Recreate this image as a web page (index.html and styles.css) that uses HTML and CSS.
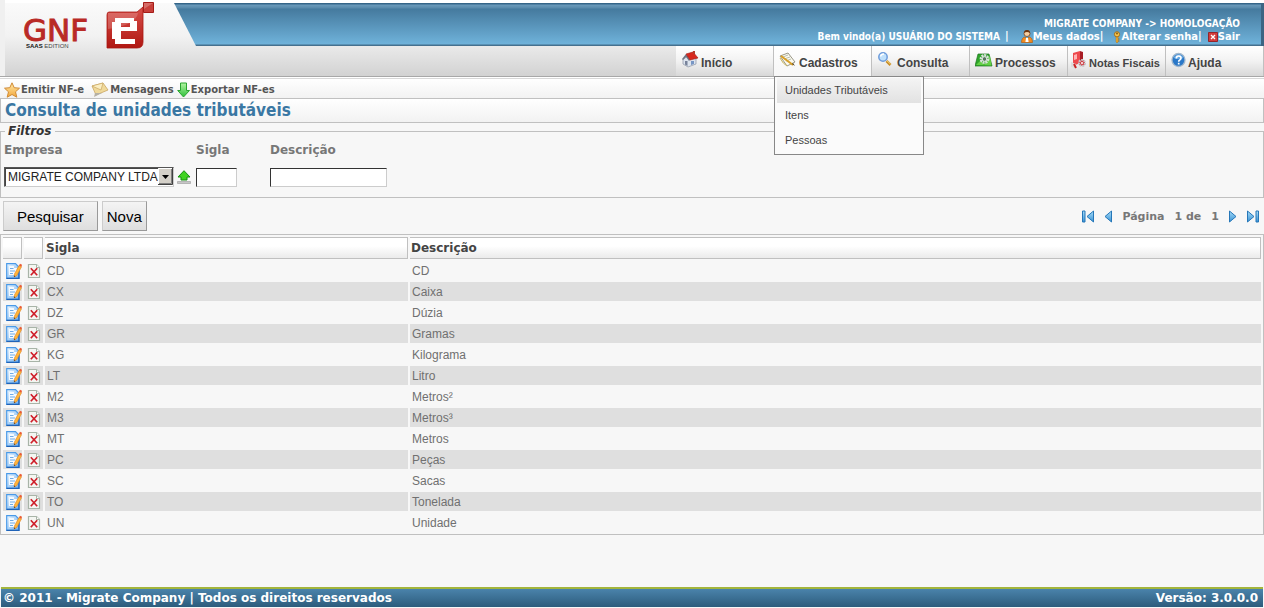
FILE: index.html
```html
<!DOCTYPE html>
<html lang="pt-BR">
<head>
<meta charset="utf-8">
<title>GNFe - Consulta de unidades tributáveis</title>
<link rel="stylesheet" href="styles.css">
</head>
<body>
<svg class="defs" aria-hidden="true">
  <defs>
    <linearGradient id="g-red" x1="0" y1="0" x2="0" y2="1"><stop offset="0" stop-color="#d8504a"/><stop offset="1" stop-color="#b01712"/></linearGradient>
    <linearGradient id="g-doc" x1="0" y1="0" x2="1" y2="1"><stop offset="0" stop-color="#eaf5ff"/><stop offset="1" stop-color="#6db0f2"/></linearGradient>
    <linearGradient id="g-arrow" x1="0" y1="0" x2="0" y2="1"><stop offset="0" stop-color="#a6dcf8"/><stop offset="1" stop-color="#3a92d4"/></linearGradient>
    <linearGradient id="g-green" x1="0" y1="0" x2="0" y2="1"><stop offset="0" stop-color="#b4f4a4"/><stop offset="1" stop-color="#2fc03a"/></linearGradient>
    <linearGradient id="g-star" x1="0" y1="0" x2="0" y2="1"><stop offset="0" stop-color="#ffe9a8"/><stop offset="1" stop-color="#f3a83c"/></linearGradient>
    <symbol id="i-edit" viewBox="0 0 16 16">
      <path d="M.7.700h8.800l3.300 3.300v11.300H.7z" fill="url(#g-doc)" stroke="#4a9ae8" stroke-width="1.200"/>
      <path d="M13 4v11.500H.5" fill="none" stroke="#1f63b8" stroke-width="1.300"/>
      <path d="M3 3h5v2h3v7H3z" fill="#f4faff"/>
      <path d="M4 5.500h3.500M4 8h5M4 10.500h3" stroke="#6faae6"/>
      <path d="M13 2.500l2.500 1.300-4.700 8.700-2.600 1.500.2-2.900z" fill="#ffb63a" stroke="#e0801e" stroke-width=".6"/>
      <path d="M13 2.500L14 .7l2 1-.5 2.100z" fill="#ea5a34"/><path d="M8.200 14l.1-1.500 1.100.8z" fill="#222"/>
    </symbol>
    <symbol id="i-del" viewBox="0 0 14 16">
      <path d="M1.500 1.500h8l3 3v10h-11z" fill="#f4f6f2" stroke="#a8b4a8" stroke-width="1.200"/>
      <path d="M9.500 1.500v3h3" fill="#fff" stroke="#a8b4a8"/>
      <path d="M3.800 5.200l6.400 7M10.200 5.200l-6.400 7" stroke="#cf1f2a" stroke-width="1.700"/>
    </symbol>
    <symbol id="i-first" viewBox="0 0 12 13"><path d="M.5 1h2.500v11H.5z" fill="url(#g-arrow)" stroke="#2677b8"/><path d="M11.500 1v11L5 6.500z" fill="url(#g-arrow)" stroke="#2677b8"/></symbol>
    <symbol id="i-prev" viewBox="0 0 8 13"><path d="M7.500 1v11L1 6.500z" fill="url(#g-arrow)" stroke="#2677b8"/></symbol>
  </defs>
</svg>

<header class="header">
  <a class="logo" href="#" aria-label="GNFe SaaS Edition">
    <svg width="140" height="52" viewBox="0 0 140 52">
      <text x="6" y="41" class="logo-name">GNF</text>
      <text x="9" y="48" class="logo-sub"><tspan class="logo-bold">SAAS</tspan> EDITION</text>
      <path d="M92 12h28l6-5v35q0 6-6 6H90V15q0-3 2-3z" fill="url(#g-red)" stroke="#a81813" stroke-width=".8"/>
      <path d="M91 13h30q-2 12-30 16z" fill="#fff" opacity=".18"/>
      <path fill-rule="evenodd" d="M98 18h19v3h3v10h-16v8h14v5H98v-5h-3V22h3zM104 23v4h9v-4z" fill="#fff"/>
      <path d="M126.500 2.500h10v10h-10z" fill="#c8403b" stroke="#a51c18"/>
      <path d="M127 3h9l-9 6z" fill="#e08a86" opacity=".6"/>
    </svg>
  </a>
  <div class="top">
    <div class="banner">
      <div class="company">MIGRATE COMPANY -&gt; HOMOLOGAÇÃO</div>
      <div class="user">
        <span class="welcome">Bem vindo(a) USUÁRIO DO SISTEMA</span><span class="bar">|</span>
        <a href="#" class="me"><svg width="12" height="13" viewBox="0 0 12 13"><circle cx="6" cy="3.500" r="3" fill="#f8cfa0" stroke="#7a431c" stroke-width=".8"/><path d="M3 3q0-3 3-3t3 3Q6 1 3 3z" fill="#6a3512"/><path d="M.5 12.500q0-5 3.500-5.500l2 2 2-2q3.500.5 3.500 5.500z" fill="#f28c22" stroke="#b85f10" stroke-width=".7"/><path d="M5 8h2l.6 4H4.400z" fill="#fff"/></svg>Meus dados</a><span>|</span>
        <a href="#" class="pass"><svg width="8" height="12" viewBox="0 0 8 12"><circle cx="4" cy="3.300" r="2.600" fill="#f6c64c" stroke="#a8701a"/><circle cx="4" cy="2.500" r=".9" fill="#7a5010"/><path d="M3 6h2v5l-1 1-1-1z" fill="#f0b030" stroke="#a8701a" stroke-width=".5"/><path d="M5 8h1.500M5 10h1.500" stroke="#a8701a"/></svg>Alterar senha</a><span>|</span>
        <a href="#" class="quit"><svg width="10" height="10" viewBox="0 0 10 10"><path d="M.5.500h9v9h-9z" fill="#d23c3c" stroke="#94242a"/><path d="M3 3l4 4M7 3L3 7" stroke="#fff" stroke-width="1.300"/></svg>Sair</a>
      </div>
    </div>
    <nav class="nav">
      <div class="item"><a href="#"><svg width="18" height="18" viewBox="0 0 18 18"><path d="M2 8v5l5 3 8-3V7l-4-4z" fill="#dde4ee" stroke="#8b93a3" stroke-width=".7"/><path d="M1 8l4-5 4 6-1 1-3-4-3 3z" fill="#6f7684"/><path d="M5 3l7-2 5 6-8 2z" fill="#d8281e" stroke="#a01810" stroke-width=".6"/><path d="M4 10h2.500v5L4 13.500z" fill="#77829a"/><path d="M10 10h3v3l-3 1z" fill="#7896c4"/><path d="M12 0h2v3h-2z" fill="#b43a2a"/></svg><span>Início</span></a></div>
      <div class="item open"><a href="#"><svg width="18" height="18" viewBox="0 0 18 18"><path d="M1 5l8-3 7 9-8 4z" fill="#fbfaf0" stroke="#8e8c7a" stroke-width=".9"/><path d="M4 6l5-2M5 8l6-2M7 10l5-2" stroke="#a8ae9c" stroke-width=".8"/><path d="M2 5l12 9" stroke="#d9a028" stroke-width="2"/><path d="M13 13l3 2-2-3z" fill="#473820"/><path d="M1 7q3 6 7 8" fill="none" stroke="#c9b45a"/></svg><span>Cadastros</span></a>
        <ul class="menu">
          <li><a href="#" class="on">Unidades Tributáveis</a></li>
          <li><a href="#">Itens</a></li>
          <li><a href="#">Pessoas</a></li>
        </ul>
      </div>
      <div class="item"><a href="#"><svg width="18" height="18" viewBox="0 0 18 18"><path d="M9.500 10l4 4" stroke="#c78c28" stroke-width="2.600"/><path d="M10 9.800l3.500 3.200" stroke="#f5d77a"/><circle cx="6" cy="6" r="4.200" fill="#bfe0fb" stroke="#6e9cdb" stroke-width="1.500"/><path d="M3.500 5.500Q4 3 7 3" fill="none" stroke="#fff" stroke-width="1.300"/></svg><span>Consulta</span></a></div>
      <div class="item"><a href="#"><svg width="18" height="18" viewBox="0 0 18 18"><path d="M3 3h11l3 12H0z" fill="#2ea52a" stroke="#1d7220" stroke-width=".7"/><path d="M1 14l5-5 3 5 6-9 1.500 9.500z" fill="#64d046"/><circle cx="9.500" cy="8" r="3.600" fill="none" stroke="#d9e0dc" stroke-width="2.600" stroke-dasharray="2 .7"/><circle cx="9.500" cy="8" r="2.300" fill="#55735d" stroke="#e6ece8"/></svg><span>Processos</span></a></div>
      <div class="item tight"><a href="#"><svg width="15" height="20" viewBox="0 0 15 20"><path d="M2 2l7-2v12l-7 3z" fill="#ee4a4e"/><path d="M9 0l3 1v9l-3 2z" fill="#a81c24"/><path d="M3 4l3-1v5L3 9z" fill="#ffb4b4"/><path d="M0 11l5 2-1 4-4-1z" fill="#ddd"/><path d="M3 13l2 4" stroke="#c22" stroke-width="2"/><circle cx="11" cy="12" r="3" fill="#d2343a" stroke="#c9c9cc" stroke-width="2.200" stroke-dasharray="1.800 .8"/><circle cx="11" cy="12" r="1" fill="#fff"/></svg><span>Notas Fiscais</span></a></div>
      <div class="item"><a href="#"><svg width="15" height="18" viewBox="0 0 15 18"><circle cx="7.500" cy="9" r="6.500" fill="#2a78c8" stroke="#9fb6cc" stroke-width="1.300"/><path d="M2.500 7Q4 3.500 7.500 3.500T12.500 7Q8 9 2.500 7z" fill="#7fbdf0" opacity=".7"/><path d="M5.300 7.500q0-2.500 2.400-2.500t2.300 2.100q0 1.200-1.300 1.900-1 .5-1 1.700M7.700 11.800v1.700" fill="none" stroke="#fff" stroke-width="1.700"/></svg><span>Ajuda</span></a></div>
    </nav>
  </div>
</header>

<div class="tools">
  <a href="#"><svg width="16" height="16" viewBox="0 0 16 16"><path d="M8 .8l2.200 4.900 5.300.5-4 3.600 1.300 5.400L8 12.500l-4.800 2.700 1.300-5.400-4-3.600 5.300-.5z" fill="url(#g-star)" stroke="#d08a34"/></svg>Emitir NF-e</a>
  <a href="#"><svg width="18" height="16" viewBox="0 0 18 16"><path d="M1 4l11-3 5 7-12 5z" fill="#f0d99a" stroke="#c9a662" stroke-width=".8"/><path d="M1 4l9 4 2-7z" fill="#fbeec2" stroke="#c9a662" stroke-width=".7"/><path d="M4 11l-1 4 8-4z" fill="#b5b0a4"/></svg>Mensagens</a>
  <a href="#" class="export"><svg width="13" height="16" viewBox="0 0 13 16"><path d="M3.500 1h6v7.500h3L6.500 15 .7 8.500h2.800z" fill="url(#g-green)" stroke="#29a52f"/></svg>Exportar NF-es</a>
</div>

<h1 class="title">Consulta de unidades tributáveis</h1>

<main class="main">
  <form>
    <fieldset class="filters">
      <legend>Filtros</legend>
      <div class="fields">
        <div class="field company-field">
          <label for="empresa">Empresa</label>
          <div class="control">
            <span class="combo">
              <select id="empresa"><option>MIGRATE COMPANY LTDA</option></select>
              <svg class="drop" width="15" height="17" viewBox="0 0 15 17" aria-hidden="true"><path d="M0 0h15v17H0z" fill="#d4d0c8"/><path d="M.5 16V.5H14" fill="none" stroke="#fff"/><path d="M14.500 0v16.500H0" fill="none" stroke="#404040"/><path d="M13.500 1v14.500H1" fill="none" stroke="#808080"/><path d="M4 7h7l-3.500 4z"/></svg>
            </span>
            <button type="button" class="plain" aria-label="Selecionar empresa"><svg width="14" height="14" viewBox="0 0 14 14"><path d="M7 .7L13 7h-3v3H4V7H1z" fill="#3fd321" stroke="#149010"/><path d="M.5 11.500h13v2H.5z" fill="#c6c6c6" stroke="#999" stroke-width=".6"/></svg></button>
          </div>
        </div>
        <div class="field sigla-field"><label for="sigla">Sigla</label><div class="control"><input id="sigla" class="short" type="text"></div></div>
        <div class="field"><label for="descricao">Descrição</label><div class="control"><input id="descricao" class="long" type="text"></div></div>
      </div>
    </fieldset>
    <div class="actions">
      <button type="submit" class="btn search">Pesquisar</button>
      <button type="button" class="btn">Nova</button>
      <div class="pager">
        <button type="button" class="plain" aria-label="Primeira"><svg width="12" height="13"><use href="#i-first"/></svg></button>
        <button type="button" class="plain" aria-label="Anterior"><svg width="8" height="13"><use href="#i-prev"/></svg></button>
        <span class="page"><span>Página</span><span>1 de</span><span>1</span></span>
        <button type="button" class="plain flip" aria-label="Próxima"><svg width="8" height="13"><use href="#i-prev"/></svg></button>
        <button type="button" class="plain flip" aria-label="Última"><svg width="12" height="13"><use href="#i-first"/></svg></button>
      </div>
    </div>
  </form>
  <div class="box">
    <table class="grid">
      <colgroup><col class="c-icon"><col class="c-icon"><col class="c-sigla"><col></colgroup>
      <thead><tr><th></th><th></th><th>Sigla</th><th>Descrição</th></tr></thead>
      <tbody id="rows"></tbody>
    </table>
  </div>
</main>

<footer class="footer"><span>© 2011 - Migrate Company | Todos os direitos reservados</span><span>Versão: 3.0.0.0</span></footer>
<script src="app.js"></script>
</body>
</html>
```
FILE: app.js
```js
const units = [
  ["CD", "CD"], ["CX", "Caixa"], ["DZ", "Dúzia"], ["GR", "Gramas"], ["KG", "Kilograma"],
  ["LT", "Litro"], ["M2", "Metros²"], ["M3", "Metros³"], ["MT", "Metros"], ["PC", "Peças"],
  ["SC", "Sacas"], ["TO", "Tonelada"], ["UN", "Unidade"]
];
document.getElementById("rows").innerHTML = units.map(([code, name]) => `
  <tr>
    <td class="act"><button type="button" class="plain" aria-label="Editar ${code}"><svg width="16" height="16"><use href="#i-edit"/></svg></button></td>
    <td class="act"><button type="button" class="plain" aria-label="Excluir ${code}"><svg width="14" height="16"><use href="#i-del"/></svg></button></td>
    <td>${code}</td><td>${name}</td>
  </tr>`).join("");
```
FILE: styles.css
```css
* { box-sizing: border-box; }
body {
  margin: 0;
  min-height: 100vh;
  display: flex;
  flex-direction: column;
  background: #f7f7f7;
  color: #555;
  font: bold 10px "DejaVu Sans", Verdana, sans-serif;
}
a { color: inherit; text-decoration: none; }
svg { flex: none; display: block; }
.defs { position: absolute; width: 0; height: 0; }
.plain { border: 0; padding: 0; background: none; display: block; cursor: pointer; }

.header {
  display: flex;
  height: 77px;
  border-top: 3px solid #fff;
  border-bottom: 1px solid #a8a8a8;
  background: linear-gradient(#fafafa, #f2f2f2 45%, #d2d2d2);
}
.logo {
  width: 174px;
  padding-left: 12px;
  flex: none;
  border-left: 5px solid #f0f0f0;
  margin-top: -3px;
}
.logo-name { font: 31px "DejaVu Sans", sans-serif; fill: #b92a26; stroke: #b92a26; stroke-width: 1px; }
.logo-sub { font: 6px "Liberation Sans", sans-serif; fill: #444; }
.logo-bold { font-weight: bold; fill: #111; }
.top { flex: 1; display: flex; flex-direction: column; align-items: flex-end; }
.banner {
  align-self: stretch;
  height: 43px;
  padding: 15px 21px 0 0;
  clip-path: polygon(0 0, 100% 0, 100% 100%, 22px 100%);
  background: linear-gradient(#356588 0 1px, #6a9abb 2px, #5889aa 5px, #457a9e 6px, #6fb2da 41px, #45708e 42px);
  border-right: 3px solid #3c6583;
  color: #fff;
  text-align: right;
}
.company, .welcome { font-family: "DejaVu Sans Condensed", Tahoma, sans-serif; }
.company { line-height: 12px; }
.user { display: flex; justify-content: flex-end; line-height: 12px; }
.user a { display: flex; align-items: center; }
.welcome { padding-top: 1px; }
.bar { margin: 0 12px 0 5px; }
.pass { margin-left: 10px; }
.quit { margin-left: 6px; }

.nav { display: flex; }
.item {
  position: relative;
  width: 98px;
  height: 30px;
  background: linear-gradient(#fff, #f2f2f2 50%, #d8d8d8);
  border-right: 1px solid #c0c0c0;
}
.item.open { background: linear-gradient(#fff, #f6f6f6); }
.item > a {
  display: flex;
  gap: 2px;
  padding: 5px 0 0 5px;
  color: #444;
  font: bold 12px/24px "Liberation Sans", Arial, sans-serif;
  white-space: nowrap;
}
.item.tight > a { gap: 3px; padding-left: 3px; font-size: 11px; }
.menu {
  position: absolute;
  z-index: 2;
  top: 30px;
  left: 0;
  width: 150px;
  margin: 0;
  padding: 1px 2px;
  list-style: none;
  background: #fbfbfb;
  border: 1px solid #888;
}
.menu a {
  display: block;
  padding-left: 8px;
  color: #444;
  font: 11px/25px "Liberation Sans", Arial, sans-serif;
}
.menu .on { background: linear-gradient(#f4f4f4, #e2e2e2); }

.tools {
  display: flex;
  gap: 7px;
  height: 22px;
  padding: 4px 4px 0;
  border-bottom: 1px solid #c0c0c0;
  background: linear-gradient(#fff 0 1px, #d8d8d8 1px 2px, #fff 2px, #f2f2f2);
}
.tools a { display: flex; align-items: center; gap: 1px; }
.tools .export { margin-left: -4px; }
.title {
  margin: 0;
  padding-left: 4px;
  border: 1px solid #c0c0c0;
  border-top: 0;
  background: linear-gradient(#fff, #f2f2f2);
  color: #3a77a3;
  font: bold 17px/23px "DejaVu Sans Condensed", Tahoma, sans-serif;
}

.filters {
  margin: 2px 0 0;
  padding: 0 3px 10px;
  border: 1px solid #c0c0c0;
  min-width: 0;
}
.filters legend { margin-left: 1px; padding: 0 4px 0 3px; color: #333; font-size: 12px; font-style: italic; line-height: 12px; }
.fields { display: flex; padding-top: 3px; }
.company-field { width: 192px; }
.sigla-field { width: 74px; }
.field label { display: block; color: #777; font-size: 12px; line-height: 20px; }
.control { display: flex; align-items: center; gap: 3px; height: 20px; margin-top: 7px; }
.combo { position: relative; }
.combo select {
  appearance: none;
  display: block;
  width: 170px;
  height: 20px;
  margin: 0;
  padding: 0 0 0 3px;
  border: 1px solid #555;
  border-right-color: #ccc;
  border-bottom-color: #ccc;
  border-radius: 0;
  outline: 0;
  background: #fff;
  color: #222;
  font: 12px "Liberation Sans", Arial, sans-serif;
  box-shadow: inset 1px 1px #444;
}
.drop { position: absolute; right: 1px; top: 1px; pointer-events: none; }
input {
  height: 19px;
  padding: 1px;
  border: 1px solid #333;
  border-right-color: #ccc;
  border-bottom-color: #ccc;
  background: #fff;
  font: 12px "Liberation Sans", Arial, sans-serif;
}
.short { width: 41px; }
.long { width: 117px; }

.actions { display: flex; align-items: center; gap: 4px; padding: 3px 5px 3px 3px; }
.btn {
  height: 30px;
  padding: 0 4px;
  border: 1px solid #ccc;
  border-right-color: #999;
  border-bottom-color: #999;
  background: linear-gradient(#f4f4f4, #dedede);
  color: #000;
  font: 15px "Liberation Sans", Arial, sans-serif;
}
.search { padding: 0 13px; }
.pager { display: flex; align-items: center; gap: 10px; margin-left: auto; color: #777; font-size: 11px; }
.page { display: flex; gap: 10px; }
.flip { transform: scaleX(-1); }

.box { border: 1px solid #c0c0c0; }
.grid { width: 100%; table-layout: fixed; border-spacing: 2px; }
.c-icon { width: 19px; }
.c-sigla { width: 363px; }
.grid th {
  height: 22px;
  padding: 0 1px;
  border: 1px solid #c0c0c0;
  border-left: 0;
  background: linear-gradient(#fff 40%, #ebebeb);
  color: #444;
  text-align: left;
  font-size: 12px;
}
.grid td {
  height: 19px;
  padding: 0 2px;
  color: #707070;
  font: 12px "Liberation Sans", Arial, sans-serif;
}
.grid .act { padding: 0 0 0 3px; }
.grid tbody tr:nth-child(even) td { background: #dfdfdf; }

.footer {
  display: flex;
  justify-content: space-between;
  margin: auto 1px 1px;
  padding: 0 5px 0 2px;
  border-top: 2px solid #a3b53c;
  background: linear-gradient(#4a83ab, #2d5c7c);
  color: #fff;
  font-size: 12px;
  line-height: 18px;
}
```
